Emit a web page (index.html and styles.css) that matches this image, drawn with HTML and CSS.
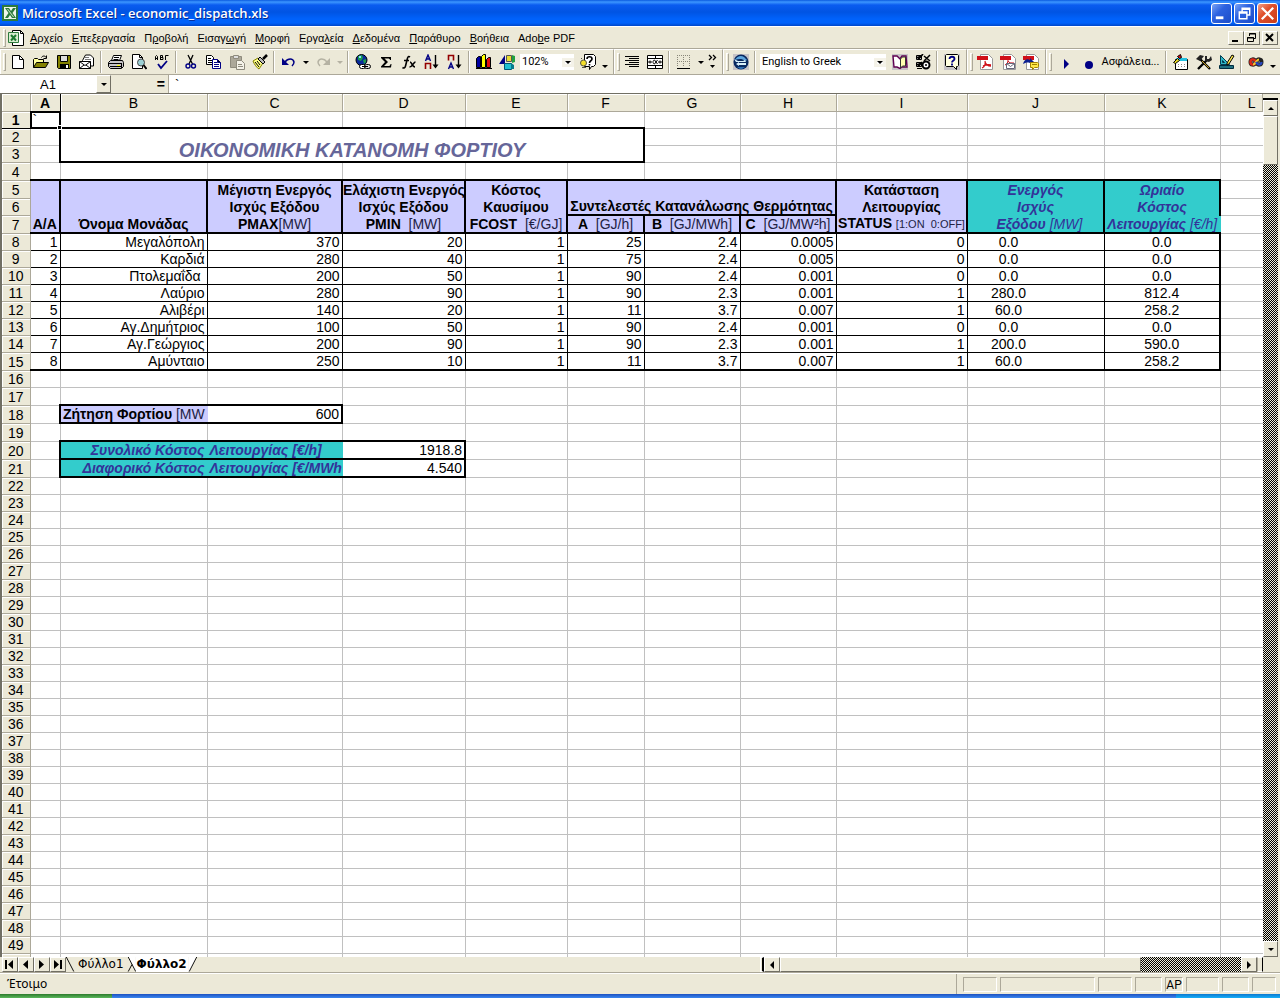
FILE: index.html
```html
<!DOCTYPE html>
<html lang="el">
<head>
<meta charset="utf-8">
<title>Microsoft Excel - economic_dispatch.xls</title>
<link rel="stylesheet" href="styles.css">
</head>
<body>
<div class="app">
<header class="titlebar">
  <svg class="ico" viewBox="0 0 16 16"><path fill="#2c7a3c" d="M0 0h16v16H0z"/><path fill="#eef6ea" d="M2 2h12v12H2z"/><path fill="#2c7a3c" d="M3 3h4l2 3 2-3h3l-3.500 5L14 13h-4l-2-3-2 3H3l3.500-5z"/><path fill="#cfe6c8" d="M5 4l6 8h1L6 4z"/></svg>
  <h1>Microsoft Excel - economic_dispatch.xls</h1>
  <div class="winbtns">
    <button class="win" aria-label="Minimize"><svg viewBox="0 0 20 20"><path fill="#fff" d="M4 13h8v3H4z"/></svg></button>
    <button class="win" aria-label="Restore"><svg viewBox="0 0 20 20"><path fill="none" stroke="#fff" stroke-width="1.500" d="M7.500 8V4.500h8v7H13M7 5.500h9M4.500 8.500h8v7h-8zM4 9.500h9"/></svg></button>
    <button class="win close" aria-label="Close"><svg viewBox="0 0 20 20"><path stroke="#fff" stroke-width="2.400" d="M4 4l12 12M16 4L4 16"/></svg></button>
  </div>
</header>

<nav class="menubar">
  <i class="grip"></i>
  <svg class="doc" viewBox="0 0 16 16"><path fill="#fff" stroke="#000" d="M4.500.5h8l3 3v12h-11z"/><path fill="none" stroke="#000" d="M12.500.5v3h3"/><path fill="#d8ecd0" stroke="#2c7a3c" d="M.5 2.500h10v10H.5z"/><path stroke="#1c7a30" stroke-width="2" d="M3 5l5 5.500M8 5l-5 5.500"/></svg>
  <div class="menus">
  <button><u>Α</u>ρχείο</button><button><u>Ε</u>πεξεργασία</button><button>Π<u>ρ</u>οβολή</button><button>Εισαγ<u>ω</u>γή</button><button><u>Μ</u>ορφή</button><button>Εργα<u>λ</u>εία</button><button><u>Δ</u>εδομένα</button><button><u>Π</u>αράθυρο</button><button><u>Β</u>οήθεια</button><button>Ado<u>b</u>e PDF</button>
  </div>
  <div class="mdi">
    <button aria-label="Minimize workbook"><svg viewBox="0 0 14 12"><path d="M3 8h6v2H3z"/></svg></button>
    <button aria-label="Restore workbook"><svg viewBox="0 0 14 12"><path fill="none" stroke="#000" d="M4.500 4V1.500h6v5H9M4 2h7M2.500 5.500h6v4h-6zM2 6h7"/></svg></button>
    <button class="last" aria-label="Close workbook"><svg viewBox="0 0 14 12"><path stroke="#000" stroke-width="2" d="M3 2l7 7M10 2L3 9"/></svg></button>
  </div>
</nav>

<div class="toolbars">
  <div class="tb">
    <i class="grip"></i>
    <button aria-label="New"><svg viewBox="0 0 16 16"><path fill="#fff" stroke="#000" d="M2.500 1.500h7l4 4v9h-11z"/><path fill="none" stroke="#000" d="M9.500 1.500v4h4"/></svg></button>
    <button aria-label="Open"><svg viewBox="0 0 16 16"><path fill="#ffff9c" stroke="#000" d="M.5 13.500v-8l1-1h3l1 1h5v3"/><path fill="#848200" stroke="#000" d="M.5 13.500l3-5h12l-3 5z"/><path fill="none" stroke="#000" d="M8.500 3.500c1-2 4-2 5 .5M13.500 1.500v3h-3"/></svg></button>
    <button aria-label="Save"><svg viewBox="0 0 16 16"><path fill="#848200" stroke="#000" d="M1.500 1.500h13v13h-12l-1-1z"/><path fill="#ddd" stroke="#000" d="M4.500 1.500h7v6h-7z"/><path d="M4 10h9v5H4z"/><path fill="#fff" d="M10 11h2v3h-2z"/></svg></button>
    <button aria-label="E-mail"><svg viewBox="0 0 16 16"><path fill="#fff" stroke="#000" d="M3.500 6.500l3-5.500h5l3 3v8h-11z"/><path stroke="#777" d="M6 5.500h6M6 3.500h4"/><path fill="#fff" stroke="#000" d="M.5 7.500h11v7H.5z"/><path fill="none" stroke="#000" d="M.5 7.500l5.500 4 5.500-4M.5 14.500L5 11M11.500 14.500L7 11"/></svg></button>
    <i class="sep"></i>
    <button aria-label="Print"><svg viewBox="0 0 16 16"><path fill="#fff" stroke="#000" d="M3.500 6.500l2-5h8l-2 5"/><path stroke="#000" d="M6 3.500h5M5.500 5.500h5"/><path fill="#c6c3c6" stroke="#000" d="M.5 8.500l2-2h12l1 2v4l-2 2h-11l-2-2z"/><path stroke="#000" d="M1 9.500h12M2 12.500h11M13.500 9v5"/><path fill="#ff0" d="M9 11h3v1H9z"/></svg></button>
    <button aria-label="Print preview"><svg viewBox="0 0 16 16"><path fill="#fff" stroke="#000" d="M1.500.5h7l3 3v11h-10z"/><path fill="none" stroke="#000" d="M8.500.5v3h3"/><circle cx="10" cy="8.500" r="3.500" fill="#9cd0d4" stroke="#444"/><path stroke="#000" stroke-width="2" d="M12.500 11l3 4"/></svg></button>
    <button aria-label="Spelling"><svg viewBox="0 0 16 16"><path fill="none" stroke="#000" d="M1.500 6V2.500l1-1 1 1V6M1.500 4.500h2M6.500 6V1.500h2v2h-2 2.500v2h-2.500M11.500 6V1.500h3"/><path fill="none" stroke="#000084" stroke-width="1.800" d="M4 10l3 4 6-7"/></svg></button>
    <i class="sep"></i>
    <button aria-label="Cut"><svg viewBox="0 0 16 16"><path fill="none" stroke="#000" stroke-width="1.300" d="M5 1l4.500 9M10 1L6 10"/><circle cx="5" cy="12" r="2" fill="none" stroke="#000084" stroke-width="1.400"/><circle cx="10.500" cy="12" r="2" fill="none" stroke="#000084" stroke-width="1.400"/></svg></button>
    <button aria-label="Copy"><svg viewBox="0 0 16 16"><path fill="#fff" stroke="#000" d="M.5 1.500h5l2 2v7h-7z"/><path stroke="#000" d="M2 4.500h3M2 6.500h4M2 8.500h4"/><path fill="#fff" stroke="#000084" d="M6.500 5.500h5l3 3v6h-8z"/><path stroke="#000084" d="M8 8.500h3M8 10.500h5M8 12.500h5M11.500 5.500v3h3"/></svg></button>
    <button aria-label="Paste"><svg viewBox="0 0 16 16"><path fill="#aca899" stroke="#8e8b7d" d="M1.500 2.500h11v11h-11z"/><path fill="#ddd" stroke="#8e8b7d" d="M4.500 1.500h5v3h-5z"/><path fill="#f4f2e8" stroke="#8e8b7d" d="M7.500 6.500h5l3 3v6h-8z"/><path stroke="#8e8b7d" d="M9 10.500h4M9 12.500h5"/></svg></button>
    <button aria-label="Format painter"><svg viewBox="0 0 16 16"><path fill="#ffff84" stroke="#848200" d="M1 7l5-3 5 5-4 6c-2-1-5-5-6-8z"/><path stroke="#000" d="M3 8l4 5M5 7l3 4"/><path fill="#bbb" stroke="#000" d="M6 5l2-2 5 5-2 2z"/><path stroke="#000" stroke-width="2.500" d="M11 5l4-4"/></svg></button>
    <i class="sep"></i>
    <button aria-label="Undo"><svg viewBox="0 0 16 16"><path fill="none" stroke="#000084" stroke-width="1.500" d="M4 8c3-4 8-4 9 0 0 2-1 3-2 4"/><path fill="#000084" d="M1 4v7h7z"/></svg></button>
    <button class="drop" aria-label="Undo list"><i class="tri"></i></button>
    <button aria-label="Redo" disabled><svg viewBox="0 0 16 16"><path fill="none" stroke="#b5b2a3" stroke-width="1.500" d="M12 8C9 4 4 4 3 8c0 2 1 3 2 4"/><path fill="#b5b2a3" d="M15 4v7H8z"/></svg></button>
    <button class="drop" aria-label="Redo list" disabled><i class="tri dim"></i></button>
    <i class="sep"></i>
    <button aria-label="Insert hyperlink"><svg viewBox="0 0 16 16"><circle cx="6.500" cy="6" r="5.500" fill="#0a2a9c" stroke="#000"/><path fill="#1a9a50" d="M3 2l4-1 1 3-2 3-3-1zM8 6l3-1v3l-2 2z"/><path fill="#8ce0ff" d="M4 2h2v2H4z"/><rect x="4.500" y="10.500" width="6" height="4" rx="2" fill="#fff" stroke="#000"/><rect x="9.500" y="10.500" width="6" height="4" rx="2" fill="#ddd" stroke="#000"/><path stroke="#000" d="M7 12.500h6"/></svg></button>
    <button aria-label="AutoSum"><svg viewBox="0 0 16 16"><path d="M3 3h10v3h-1c0-1-1-1.500-2-1.500H6.500L10 8l-4 4h4.500c1 0 2-.5 2-2h1l-.5 3.500H3V12.500L7 8 3 4z"/></svg></button>
    <button aria-label="Paste function"><svg viewBox="0 0 16 16"><path fill="none" stroke="#000" stroke-width="1.600" d="M9 3C7 1.500 6.500 4 6 6L4.500 12c-.5 2-1.500 2.500-3 1.500M3 6.500h5M9 8c2 0 2 5 5 5M14.500 8c-2 0-3 5-6 5"/></svg></button>
    <button aria-label="Sort ascending"><svg viewBox="0 0 16 16"><path fill="none" stroke="#000084" stroke-width="1.400" d="M1.500 7l2.500-6 2.500 6M2.500 5h3"/><path fill="none" stroke="#940000" stroke-width="1.600" d="M1.500 15V9.500h5V15"/><path stroke="#000" stroke-width="1.400" d="M11.500 1v12"/><path d="M8.500 10.500h6l-3 4z"/></svg></button>
    <button aria-label="Sort descending"><svg viewBox="0 0 16 16"><path fill="none" stroke="#940000" stroke-width="1.600" d="M1.500 6.500V1.500h5v5"/><path fill="none" stroke="#000084" stroke-width="1.400" d="M1.500 15l2.500-6 2.500 6M2.500 13h3"/><path stroke="#000" stroke-width="1.400" d="M11.500 1v12"/><path d="M8.500 10.500h6l-3 4z"/></svg></button>
    <i class="sep"></i>
    <button aria-label="Chart wizard"><svg viewBox="0 0 16 16"><path fill="#0000a0" stroke="#000" d="M.5 4.500l2-2h2v11h-4z"/><path fill="#ff0" stroke="#000" d="M5.500 2.500l2-2h2v13h-4z"/><path fill="#e01010" stroke="#000" d="M10.500 5.500l2-2h2v10h-4z"/><path stroke="#000" d="M0 14.500h16"/></svg></button>
    <button aria-label="Drawing"><svg viewBox="0 0 16 16"><path fill="#000084" d="M0 10l6-9v9z"/><path fill="#e8dc30" stroke="#555" d="M7.500 1.500h5v6h-5z"/><path fill="#20a040" d="M13 1l3 1v6l-3 1z"/><path fill="#20c0d0" stroke="#057" d="M5.500 9.500h7v6h-7z"/><path fill="#067a8a" d="M12 9l3 2v4h-3z"/></svg></button>
    <span class="combo zoom"><select aria-label="Zoom"><option>102%</option></select><i class="tri"></i></span>
    <button aria-label="Help"><svg viewBox="0 0 16 16"><path fill="#fff" stroke="#000" d="M4.500.5h9l2 2v8l-2 2h-2l-2 3v-3h-5z"/><path fill="none" stroke="#000" stroke-width="1.600" d="M7 5c0-3 5-3 5 0 0 2-2.500 1.500-2.500 4M9.500 10v1.500"/><circle cx="3.500" cy="9" r="3" fill="#f5e02a" stroke="#554"/><path stroke="#554" d="M2 13.500h4M1 4l1 1"/></svg></button>
    <button class="drop low" aria-label="More buttons"><i class="tri"></i></button>
  </div>

  <div class="tb">
    <i class="grip"></i>
    <button aria-label="Align right"><svg viewBox="0 0 16 16"><path stroke="#000" d="M1 2.500h14M5 4.500h10M1 6.500h14M5 8.500h10M1 10.500h14M5 12.500h10"/></svg></button>
    <button aria-label="Merge and center"><svg viewBox="0 0 16 16"><path fill="#fff" stroke="#000" d="M.5 1.500h15v13H.5z"/><path fill="none" stroke="#000" d="M0 4.500h16M0 11.500h16M8.500 1v3M8.500 12v3M1 8h4M11 8h4M3 6.500v3M13 6.500v3M10.500 6l-3 4c-2 0-2-4 0-4l3 4"/></svg></button>
    <i class="sep"></i>
    <button aria-label="Borders"><svg viewBox="0 0 16 16"><path fill="none" stroke="#8a877a" stroke-dasharray="1 1" d="M1.500 1v12M7.500 1v12M13.500 1v12M1 1.500h13M1 7.500h13"/><path stroke="#000" d="M1 14.500h13"/></svg></button>
    <button class="drop" aria-label="Border styles"><i class="tri"></i></button>
    <button class="more" aria-label="More formatting buttons"><svg viewBox="0 0 10 16"><path fill="none" stroke="#000" stroke-width="1.300" d="M1 1l2.500 2.500L1 6M5 1l2.500 2.500L5 6"/><path d="M2 11h5l-2.500 3z"/></svg></button>
  </div>

  <div class="tb">
    <i class="grip"></i>
    <button aria-label="Translate"><svg viewBox="0 0 16 16"><path fill="#c6c3c6" d="M0 0h16v16H0z"/><circle cx="8" cy="8" r="7.500" fill="#082860"/><path fill="#5ca4dc" d="M2 6c2-4 6-5 9-3l3 3-2 1c-3-3-7-2-10-1z"/><path fill="#d8f0fa" d="M1 5l4 2h5l2-1 1 2H3zM3 10l3-2v1h7v2H6v1z"/><path fill="#2c6cb0" d="M4 13h8l-3 2H7z"/></svg></button>
    <i class="sep"></i>
    <span class="combo lang"><select aria-label="Translation direction"><option>English to Greek</option></select><i class="tri"></i></span>
    <button aria-label="Dictionary"><svg viewBox="0 0 16 16"><path fill="#c6c3c6" d="M0 0h16v16H0z"/><path fill="#fff" stroke="#600050" stroke-width="1.400" d="M1 2h4l3 3 2-3h4l1 11h-5l-2 1.500-3-1.500H2z"/><path fill="#ffffb0" stroke="#333" d="M8.500 5l2-2h3v9h-3l-2 2z"/></svg></button>
    <button aria-label="Translation options"><svg viewBox="0 0 16 16"><path fill="#fff" stroke="#000" d="M1.500 1.500h5v4h-5zM1.500 8.500h5v4h-5z"/><path stroke="#000" stroke-width="1.500" d="M2 3l2 2 4-5M2 10l2 2 3-4M9 2l6 5M15 1L9 7"/><circle cx="11" cy="11" r="3.500" fill="#fff" stroke="#000" stroke-width="2"/><circle cx="11" cy="11" r="1"/><path stroke="#000" d="M2 14.500h5"/></svg></button>
    <i class="sep"></i>
    <button aria-label="Translator help"><svg viewBox="0 0 16 16"><path fill="#c6c3c6" d="M0 0h16v16H0z"/><path fill="#ffffe0" stroke="#000" d="M2.500.5h11l1 1v10l-1 1h-1v3l-3-3h-7l-1-1v-10z"/><path fill="none" stroke="#000084" stroke-width="1.800" d="M5.500 5c0-3 5-3 5 0 0 1.500-2.500 1.500-2.500 3.500M8 9.500v2"/></svg></button>
  </div>

  <div class="tb">
    <i class="grip"></i>
    <button aria-label="Convert to PDF"><svg viewBox="0 0 16 16"><path fill="#fff" stroke="#999" d="M3.500.5h8l4 4v11h-12z"/><path fill="#d01018" d="M0 2h11v4H0z"/><path fill="none" stroke="#d01018" stroke-width="1.300" d="M8 7c1 4-1 6-3 7M8 8c1 3 3 4 6 4M6 12c2-1 5-1.500 8-1"/></svg></button>
    <button aria-label="Convert and e-mail"><svg viewBox="0 0 16 16"><path fill="#fff" stroke="#999" d="M3.500.5h8l4 4v11h-12z"/><path fill="#d01018" d="M0 2h11v4H0z"/><path fill="none" stroke="#d01018" d="M8 6c0 3-1 4-3 5M8 7c1 2 3 2 6 2"/><path fill="#fff" stroke="#667" d="M6.500 9.500h8v5h-8zM6.500 9.500l4 3 4-3"/></svg></button>
    <button aria-label="Convert and review"><svg viewBox="0 0 16 16"><path fill="#fff" stroke="#999" d="M3.500.5h8l4 4v11h-12z"/><path fill="#d01018" d="M0 2h11v4H0z"/><path fill="#0c2090" d="M0 10c1-4 4-6 7-4V4l4 4-4 3V9c-3-1-5 0-7 1z"/><path fill="#ffe94a" stroke="#a08000" d="M7.500 8.500h7l1 1v3l-1 1h-3l-2 2v-2h-2z"/><path stroke="#a08000" d="M9 10.500h5"/></svg></button>
  </div>

  <div class="tb grow">
    <i class="grip"></i>
    <button class="vb" aria-label="Run macro"><svg viewBox="0 0 16 16"><path fill="#000084" d="M8 5l5 5-5 5z"/></svg></button>
    <button class="vb" aria-label="Record macro"><svg viewBox="0 0 16 16"><circle cx="10" cy="11" r="4" fill="#000084"/></svg></button>
    <button class="txt">Ασφάλεια...</button>
    <i class="sep"></i>
    <button aria-label="Visual Basic editor"><svg viewBox="0 0 16 16"><path fill="#fff" stroke="#000" d="M2.500 5.500h12v10h-12z"/><path fill="#20c0e0" d="M3 4h11v3H3z"/><path stroke="#888" stroke-dasharray="1 2" d="M5 10.500h8M5 12.500h8"/><path fill="#e8d820" stroke="#000" d="M.5 8.500l4-4 2 2-4 3z"/><path fill="#d01018" stroke="#000" d="M4.500 2.500l3-2 1 3-2 1z"/></svg></button>
    <button aria-label="Control toolbox"><svg viewBox="0 0 16 16"><path stroke="#000" stroke-width="2.400" d="M4 5l10 10M11 6l-9 9"/><path stroke="#c8a020" d="M6 7l7 7"/><path fill="#222" d="M0 5l4-4 4 1-4 5-2-1zM9 2h2v3h2l2-3 1 4-3 2-4-1z"/></svg></button>
    <button aria-label="Design mode"><svg viewBox="0 0 16 16"><path fill="#30b8c8" stroke="#003c50" d="M1.500 1.500l9 9h-9z"/><path fill="#ece9d8" stroke="#003c50" d="M3.500 6.500l2 2h-2z"/><path fill="#207080" stroke="#002c40" d="M.5 11.500h14v3H.5z"/><path fill="#ffe94a" stroke="#000" d="M8 9l5-8 2 1-5 8-2 1z"/></svg></button>
    <i class="sep"></i>
    <button aria-label="Script editor"><svg viewBox="0 0 16 16"><path fill="none" stroke="#222" stroke-width="4" d="M8 8C6 4 2.500 5 2.500 8S6 12 8 8s5.500-3 5.500 0S10 12 8 8z"/><path fill="none" stroke="#e02818" stroke-width="2.400" d="M8 8C6 4 2.500 5 2.500 8S6 12 8 8"/><path fill="none" stroke="#f0c830" stroke-width="2" d="M5 10.500c3 0 3-5 6-5"/><path fill="none" stroke="#2848c0" stroke-width="2.200" d="M13.500 8c0 3-3.500 4-5.500 0"/></svg></button>
    <button class="drop low" aria-label="More Visual Basic buttons"><i class="tri"></i></button>
  </div>
</div>

<div class="formula">
  <input class="namebox" aria-label="Name box" value="A1">
  <button class="raised namedrop" aria-label="Names"><i class="tri"></i></button>
  <button class="eq" aria-label="Edit formula">=</button>
  <input class="fx" aria-label="Formula" value="`">
</div>

<main class="work">
  <div class="sheet">
  <table>
    <colgroup><col class="w0"><col class="wa"><col class="wb"><col class="wc"><col class="wd"><col class="we"><col class="wf"><col class="wg"><col class="wg"><col class="wi"><col class="wj"><col class="wk"><col></colgroup>
    <thead><tr><th></th><th class="on">A</th><th>B</th><th>C</th><th>D</th><th>E</th><th>F</th><th>G</th><th>H</th><th>I</th><th>J</th><th>K</th><th class="colL">L</th></tr></thead>
    <tbody id="rows">
    <tr><th class="on">1</th><td class="active">`<span class="cursor"><i></i></span></td><td></td><td></td><td></td><td></td><td></td><td></td><td></td><td></td><td></td><td></td><td></td></tr>
    <tr><th>2</th><td></td><td class="title box" colspan="5" rowspan="2">ΟΙΚΟΝΟΜΙΚΗ ΚΑΤΑΝΟΜΗ ΦΟΡΤΙΟΥ</td><td></td><td></td><td></td><td></td><td></td><td></td></tr>
    <tr><th>3</th><td></td><td></td><td></td><td></td><td></td><td></td><td></td></tr>
    <tr class="tall"><th>4</th><td></td><td></td><td></td><td></td><td></td><td></td><td></td><td></td><td></td><td></td><td></td><td></td></tr>
    <tr class="tall hd"><th>5</th><td class="f t2 r2"></td><td class="f t2 r2"></td><td class="f t2 r2">Μέγιστη Ενεργός</td><td class="f t2 r2">Ελάχιστη Ενεργός</td><td class="f t2 r2">Κόστος</td><td class="f t2 r2" colspan="3"></td><td class="f t2 r2">Κατάσταση</td><td class="q t2 r2">Ενεργός</td><td class="q t2 r2">Ωριαίο</td><td></td></tr>
    <tr class="hd"><th>6</th><td class="f r2"></td><td class="f r2"></td><td class="f r2">Ισχύς Εξόδου</td><td class="f r2">Ισχύς Εξόδου</td><td class="f r2">Καυσίμου</td><td class="f r2 b2" colspan="3">Συντελεστές Κατανάλωσης Θερμότητας</td><td class="f r2">Λειτουργίας</td><td class="q r2">Ισχύς</td><td class="q r2">Κόστος</td><td></td></tr>
    <tr class="tall hd"><th>7</th><td class="f r2 b2">Α/Α</td><td class="f r2 b2">Όνομα Μονάδας</td><td class="f r2 b2">PMAX<span>[MW]</span></td><td class="f r2 b2">PMIN&nbsp; <span>[MW]</span></td><td class="f r2 b2">FCOST&nbsp; <span>[€/GJ]</span></td><td class="f r2 b2">A&nbsp; <span>[GJ/h]</span></td><td class="f r2 b2">B&nbsp; <span>[GJ/MWh]</span></td><td class="f r2 b2">C&nbsp; <span>[GJ/MW²h]</span></td><td class="f r2 b2">STATUS <span class="sm">[1:ON&nbsp; 0:OFF]</span></td><td class="q r2 b2">&nbsp; Εξόδου <span>[MW]</span></td><td class="q b2">Λειτουργίας <span>[€/h]</span></td><td></td></tr>
    <tr class="d"><th>8</th><td>1</td><td>Μεγαλόπολη</td><td>370</td><td>20</td><td>1</td><td>25</td><td>2.4</td><td>0.0005</td><td>0</td><td class="j">0.0</td><td class="k">0.0</td><td></td></tr>
    <tr class="d"><th>9</th><td>2</td><td>Καρδιά</td><td>280</td><td>40</td><td>1</td><td>75</td><td>2.4</td><td>0.005</td><td>0</td><td class="j">0.0</td><td class="k">0.0</td><td></td></tr>
    <tr class="d"><th>10</th><td>3</td><td>Πτολεμαΐδα&nbsp;</td><td>200</td><td>50</td><td>1</td><td>90</td><td>2.4</td><td>0.001</td><td>0</td><td class="j">0.0</td><td class="k">0.0</td><td></td></tr>
    <tr class="d"><th>11</th><td>4</td><td>Λαύριο</td><td>280</td><td>90</td><td>1</td><td>90</td><td>2.3</td><td>0.001</td><td>1</td><td class="j">280.0</td><td class="k">812.4</td><td></td></tr>
    <tr class="d"><th>12</th><td>5</td><td>Αλιβέρι</td><td>140</td><td>20</td><td>1</td><td>11</td><td>3.7</td><td>0.007</td><td>1</td><td class="j">60.0</td><td class="k">258.2</td><td></td></tr>
    <tr class="d"><th>13</th><td>6</td><td>Αγ.Δημήτριος</td><td>100</td><td>50</td><td>1</td><td>90</td><td>2.4</td><td>0.001</td><td>0</td><td class="j">0.0</td><td class="k">0.0</td><td></td></tr>
    <tr class="d"><th>14</th><td>7</td><td>Αγ.Γεώργιος</td><td>200</td><td>90</td><td>1</td><td>90</td><td>2.3</td><td>0.001</td><td>1</td><td class="j">200.0</td><td class="k">590.0</td><td></td></tr>
    <tr class="d end tall"><th>15</th><td>8</td><td>Αμύνταιο</td><td>250</td><td>10</td><td>1</td><td>11</td><td>3.7</td><td>0.007</td><td>1</td><td class="j">60.0</td><td class="k">258.2</td><td></td></tr>
    <tr><th>16</th><td></td><td></td><td></td><td></td><td></td><td></td><td></td><td></td><td></td><td></td><td></td><td></td></tr>
    <tr class="tall"><th>17</th><td></td><td></td><td></td><td></td><td></td><td></td><td></td><td></td><td></td><td></td><td></td><td></td></tr>
    <tr class="tall"><th>18</th><td></td><td class="f l2 t2 b2 left">Ζήτηση Φορτίου <span>[MW</span></td><td class="t2 b2 r2">600</td><td></td><td></td><td></td><td></td><td></td><td></td><td></td><td></td><td></td></tr>
    <tr class="tall"><th>19</th><td></td><td></td><td></td><td></td><td></td><td></td><td></td><td></td><td></td><td></td><td></td><td></td></tr>
    <tr class="tall"><th>20</th><td></td><td class="q l2 t2 b2 right">Συνολικό Κόστος</td><td class="q t2 b2 left">Λειτουργίας [€/h]</td><td class="t2 b2 r2">1918.8</td><td></td><td></td><td></td><td></td><td></td><td></td><td></td><td></td></tr>
    <tr class="tall"><th>21</th><td></td><td class="q l2 b2 right">Διαφορικό Κόστος</td><td class="q b2 left">Λειτουργίας [€/MWh</td><td class="b2 r2">4.540</td><td></td><td></td><td></td><td></td><td></td><td></td><td></td><td></td></tr>
    </tbody>
  </table>
  </div>
  <div class="vscroll">
    <i class="split"></i>
    <button class="raised" aria-label="Scroll up"><i class="tri up"></i></button>
    <i class="thumb raised"></i>
    <i class="track"></i>
    <button class="raised" aria-label="Scroll down"><i class="tri"></i></button>
  </div>
</main>

<div class="tabbar">
  <div class="tabnav">
    <button class="raised" aria-label="First sheet"><svg viewBox="0 0 14 14"><path d="M2 2h2v9H2zM10 2v9L5 6.500z"/></svg></button>
    <button class="raised" aria-label="Previous sheet"><svg viewBox="0 0 14 14"><path d="M9 2v9L4 6.500z"/></svg></button>
    <button class="raised" aria-label="Next sheet"><svg viewBox="0 0 14 14"><path d="M4 2v9l5-4.500z"/></svg></button>
    <button class="raised" aria-label="Last sheet"><svg viewBox="0 0 14 14"><path d="M3 2v9l5-4.500zM9 2h2v9H9z"/></svg></button>
  </div>
  <div class="tabs">
    <svg viewBox="0 0 9 16"><path stroke="#000" d="M0 0l8 15.500"/></svg>
    <button>Φύλλο1</button>
    <svg viewBox="0 0 9 16"><path fill="#fff" d="M1 0h8v16z"/><path fill="none" stroke="#000" d="M1 0l8 15.500M5 8l-4 7.500"/></svg>
    <button class="cur">Φύλλο2</button>
    <svg viewBox="0 0 9 16"><path fill="#fff" d="M0 0h9L1 16H0z"/><path stroke="#000" d="M9 0L1 15.500"/></svg>
  </div>
  <div class="hscroll">
    <i class="hsplit"></i>
    <button class="raised" aria-label="Scroll left"><i class="tri lt"></i></button>
    <i class="thumb raised"></i>
    <i class="track"></i>
    <button class="raised" aria-label="Scroll right"><i class="tri rt"></i></button>
    <i class="hsplit end"></i>
  </div>
</div>

<footer class="status">
  <span class="ready">Έτοιμο</span>
  <div class="panes"><i class="p34"></i><i class="p95"></i><i class="p34"></i><i class="p27"></i><i class="p18">AP</i><i class="p33"></i><i class="p27"></i><i class="p24"></i></div>
</footer>
<div class="taskbar"><i class="start"></i><i class="mid"></i><i class="tray"></i></div>
</div>
<script src="rows.js"></script>
</body>
</html>
```
FILE: rows.js
```js
// Append the blank rows below the data; the last one is only partly in view and has no label.
const body = document.getElementById('rows');
for (let n = 22; n <= 50; n++) {
  const tr = document.createElement('tr');
  tr.innerHTML = '<th>' + (n < 50 ? n : '') + '</th>' + '<td></td>'.repeat(12);
  body.appendChild(tr);
}
```
FILE: styles.css
```css
* { box-sizing: border-box; }
html, body { margin: 0; height: 100%; }
body { background: #ece9d8; color: #000; font: 11px/14px Roboto, sans-serif; overflow: hidden; }
button, input, select { font: inherit; color: inherit; border: 0; padding: 0; margin: 0; background: none; border-radius: 0; }
svg { display: block; }
i { font-style: normal; display: block; }
.app { height: 100vh; display: flex; flex-direction: column; }

.titlebar { flex: none; height: 26px; display: flex; align-items: center; padding: 0 2px; gap: 4px; background: linear-gradient(#0a5ae0 0, #3c96ff 2px, #0a5cf0 5px, #0054e3 12px, #0062fb 19px, #0062fb 23px, #0046c8 26px); }
.titlebar .ico { width: 16px; height: 16px; }
.titlebar h1 { margin: 0; flex: 1; font: 600 13px/18px "Open Sans", sans-serif; color: #fff; text-shadow: 1px 1px #0a2a90; white-space: nowrap; }
.winbtns { display: flex; gap: 2px; }
.win { width: 21px; height: 21px; border: 1px solid #fff; border-radius: 3px; background: linear-gradient(135deg, #7ba4f5, #2c62e0 40%, #1c4cc8); }
.win.close { background: linear-gradient(135deg, #f0a088, #e0502c 40%, #c83c18); }

.menubar { flex: none; height: 22px; display: flex; align-items: center; padding-left: 3px; border-top: 1px solid #fff; }
.grip { flex: none; width: 3px; height: 18px; border: 1px solid; border-color: #fff #aca899 #aca899 #fff; }
.doc { width: 16px; height: 16px; margin: 0 6px 0 2px; }
.menus { flex: 1; display: flex; gap: 9px; font-family: "Liberation Sans", Arial, sans-serif; }
.menus button { white-space: nowrap; }
.mdi { display: flex; padding-right: 2px; }
.mdi button { width: 16px; height: 14px; border: 1px solid; border-color: #fff #716f64 #716f64 #fff; }
.mdi .last { margin-left: 2px; }

.toolbars { flex: none; height: 27px; display: flex; border-top: 1px solid #aca899; border-bottom: 1px solid #aca899; }
.tb { flex: none; display: flex; align-items: center; padding: 0 3px 0 2px; border-top: 1px solid #fff; border-right: 1px solid #aca899; border-left: 1px solid #fff; }
.tb.grow { flex: 1; border-right: 0; padding-right: 0; }
.tb button { flex: none; width: 23px; height: 22px; display: flex; align-items: center; justify-content: center; }
.tb button svg { width: 16px; height: 16px; }
.sep { flex: none; width: 2px; height: 22px; margin: 0 2px; background: linear-gradient(90deg, #aca899 50%, #fff 50%); }
.tb .drop { width: 11px; }
.tb .low { padding-top: 8px; }
.tb .more { width: 13px; }
.tb .more svg { width: 10px; }
.tb .txt { width: 65px; }
.tri { width: 0; height: 0; border: 3px solid transparent; border-top-color: #000; border-bottom: 0; }
.tri.dim { border-top-color: #b5b2a3; }
.tri.up { border: 3px solid transparent; border-bottom-color: #000; border-top: 0; }
.tri.lt { border: 4px solid transparent; border-right-color: #000; border-left: 0; }
.tri.rt { border: 4px solid transparent; border-left-color: #000; border-right: 0; }
.combo { height: 16px; margin: 0 2px; display: flex; align-items: center; background: #fff; }
.combo select { appearance: none; flex: 1; height: 16px; padding-left: 2px; }
.combo .tri { flex: none; border-width: 3px 3px 0; margin: 0 3px; outline: 3px solid #f4f2e8; }
.zoom { width: 54px; }
.lang { width: 126px; }

.formula { flex: none; height: 18px; display: flex; background: #fff; }
.formula input { outline: 0; }
.namebox { width: 96px; text-align: center; font: 13px/17px "Liberation Sans", Arial, sans-serif; }
.raised { background: #ece9d8; border: 1px solid; border-color: #fff #716f64 #716f64 #fff; display: flex; align-items: center; justify-content: center; }
.namedrop { width: 15px; }
.eq { width: 58px; padding-right: 3px; text-align: right; font: bold 14px/16px "Liberation Sans", Arial, sans-serif; background: #ece9d8; border-right: 1px solid #aca899; }
.fx { flex: 1; padding-left: 6px; font: 13px/17px "Liberation Sans", Arial, sans-serif; }

.work { flex: 1; min-height: 0; display: flex; border: solid #716f64; border-width: 1px 0 0 2px; padding-right: 2px; }
.sheet { flex: 1; min-width: 0; overflow: hidden; background: #fff; }
table { table-layout: fixed; width: 100%; border-collapse: collapse; font: 14px/15px "Liberation Sans", Arial, sans-serif; }
.w0 { width: 28px; } .wa { width: 30px; } .wb { width: 147px; } .wc { width: 135px; } .wd { width: 123px; } .we { width: 102px; }
.wf { width: 77px; } .wg { width: 96px; } .wi { width: 131px; } .wj { width: 137px; } .wk { width: 116px; }
tr { height: 17px; }
.tall { height: 18px; }
td, th { padding: 0 2px; border: 1px solid #c0c0c0; overflow: hidden; white-space: nowrap; vertical-align: bottom; font-weight: normal; }
td { text-align: right; }
th { background: #ece9d8; border-color: #aca899; box-shadow: inset 1px 1px #fff; text-align: center; padding: 0 1px; }
th:first-child { border-left: 0; }
thead th { border-top: 0; }
th.on { font-weight: bold; border-right-color: #000; border-bottom-color: #000; }
.colL { padding-left: 22px; }
tbody td:last-child { border-right: 0; }
.title { text-align: center; font: italic bold 20px/22px "Liberation Sans", Arial, sans-serif; color: #669; }
.box { border: 2px solid #000; }
.f { background: #ccf; border-color: #ccf; font-weight: bold; text-align: center; }
.f span { font-weight: normal; color: #224; }
.f .sm { font-size: 11px; }
.q { background: #3cc; border-color: #3cc; color: #339; font-weight: bold; font-style: italic; text-align: center; }
.q span { font-weight: normal; }
.hd td { padding: 0; }
.left { text-align: left; }
.right { text-align: right; }
.t2 { border-top: 2px solid #000; }
.b2 { border-bottom: 2px solid #000; }
.l2 { border-left: 2px solid #000; }
.r2 { border-right: 2px solid #000; }
.d td:not(:last-child) { border-right-color: #000; border-bottom-color: #000; }
.d td.k { border-right: 2px solid #000; text-align: center; }
.d td.j { text-align: center; padding-right: 56px; }
.end td:not(:last-child) { border-bottom: 2px solid #000; }
.active { position: relative; overflow: visible; text-align: left; }
.cursor { position: absolute; inset: -1px; border: 2px solid #000; }
.cursor i { position: absolute; right: -3px; bottom: -3px; width: 5px; height: 5px; background: #000; border: 1px solid #fff; }

.vscroll { flex: none; width: 15px; display: flex; flex-direction: column; }
.split { height: 6px; border-bottom: 2px solid #000; }
.vscroll .raised { flex: none; height: 16px; }
.vscroll i.thumb { height: 49px; }
.track { flex: 1; background: repeating-conic-gradient(#000 0 25%, #ece9d8 0 50%) 0 0 / 2px 2px; }

.tabbar { flex: none; height: 16px; display: flex; padding: 0 17px 0 2px; border-bottom: 1px solid #aca899; }
.tabnav { display: flex; }
.tabnav .raised { width: 16px; }
.tabnav svg { width: 14px; height: 14px; }
.tabs { flex: 1; display: flex; font: 12px/15px "DejaVu Sans", sans-serif; }
.tabs svg { width: 9px; height: 15px; }
.tabs button { padding: 0 3px; }
.tabs .cur { background: #fff; font-weight: bold; padding: 0 1px; }
.hscroll { width: 503px; display: flex; }
.hsplit { width: 4px; border: 1px solid #fff; border-right: 2px solid #000; }
.hsplit.end { width: 6px; border-color: #fff #000 #fff #aca899; border-right-width: 1px; }
.hscroll .raised { width: 16px; }
.hscroll i.thumb { flex: 18; width: auto; }
.hscroll .track { flex: 5; }

.status { flex: none; height: 21px; display: flex; align-items: center; justify-content: space-between; border-top: 1px solid #fff; font-size: 12px; padding-left: 7px; }
.ready { font-family: "Noto Sans", sans-serif; }
.panes { display: flex; gap: 3px; height: 100%; padding: 3px 4px 2px 6px; border-left: 1px solid #aca899; }
.panes i { border: 1px solid; border-color: #aca899 #fff #fff #aca899; line-height: 14px; }
.p18 { width: 18px; text-align: center; } .p24 { width: 24px; } .p27 { width: 27px; } .p33 { width: 33px; } .p34 { width: 34px; } .p95 { width: 95px; }
.taskbar { flex: none; height: 4px; display: flex; }
.start { width: 112px; background: linear-gradient(#2c7a2c, #5cb85c); }
.mid { flex: 1; background: linear-gradient(#1c50c0, #3c88f0); }
.tray { width: 104px; background: linear-gradient(#0c78d0, #18b0f8); }
```
